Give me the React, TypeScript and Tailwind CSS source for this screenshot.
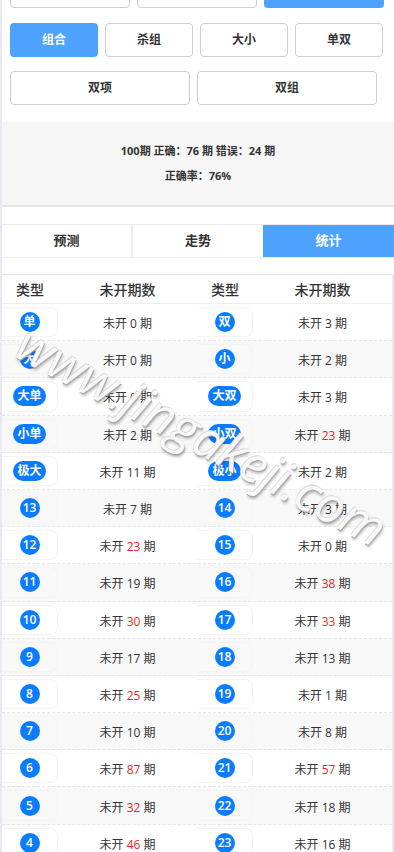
import React from 'react';

type Row = { a: string; an: number; b: string; bn: number };

const rows: Row[] = [
  { a: '单', an: 0, b: '双', bn: 3 },
  { a: '大', an: 0, b: '小', bn: 2 },
  { a: '大单', an: 0, b: '大双', bn: 3 },
  { a: '小单', an: 2, b: '小双', bn: 23 },
  { a: '极大', an: 11, b: '极小', bn: 2 },
  { a: '13', an: 7, b: '14', bn: 3 },
  { a: '12', an: 23, b: '15', bn: 0 },
  { a: '11', an: 19, b: '16', bn: 38 },
  { a: '10', an: 30, b: '17', bn: 33 },
  { a: '9', an: 17, b: '18', bn: 13 },
  { a: '8', an: 25, b: '19', bn: 1 },
  { a: '7', an: 10, b: '20', bn: 8 },
  { a: '6', an: 87, b: '21', bn: 57 },
  { a: '5', an: 32, b: '22', bn: 18 },
  { a: '4', an: 46, b: '23', bn: 16 },
];

function Badge({ label }: { label: string }) {
  const wide = label.length > 1 && !/^\d+$/.test(label);
  return (
    <span
      className={
        'inline-flex h-[20px] items-center justify-center rounded-full bg-[#0a7cff] text-[12px] font-semibold text-white ' +
        (wide ? 'px-[4px]' : 'w-[20px]')
      }
    >
      {label}
    </span>
  );
}

function Count({ n }: { n: number }) {
  return (
    <span className="text-[12px] text-[#333]">
      未开 <span className={n > 20 ? 'text-[#ff1a1a]' : ''}>{n}</span> 期
    </span>
  );
}

function TypeCell({ label }: { label: string }) {
  return (
    <div className="flex h-full items-center justify-center py-[3px]">
      <div className="flex h-full w-full items-center justify-center rounded-r-[8px] border-y border-r border-[#f4f4f4]">
        <Badge label={label} />
      </div>
    </div>
  );
}

function Btn({ label, w, active }: { label: string; w: string; active?: boolean }) {
  return (
    <button
      className={
        'h-[34px] rounded-[4px] text-[12px] font-bold ' +
        w +
        (active ? ' bg-[#4da3ff] text-white' : ' border border-[#cfcfcf] bg-white text-[#333]')
      }
    >
      {label}
    </button>
  );
}

export default function App() {
  return (
    <div
      className="relative h-[852px] overflow-hidden border-l-2 border-[#e8eaef] bg-white"
      style={{ fontFamily: '"Open Sans", "Noto Sans CJK SC", sans-serif' }}
    >
      <div className="-mt-[26px] px-[8px]">
        <div className="flex gap-[7px]">
          <Btn label="" w="w-[120px]" />
          <Btn label="" w="w-[120px]" />
          <Btn label="" w="w-[120px]" active />
        </div>
        <div className="mt-[15px] flex gap-[7px]">
          <Btn label="组合" w="w-[88px]" active />
          <Btn label="杀组" w="w-[88px]" />
          <Btn label="大小" w="w-[88px]" />
          <Btn label="单双" w="w-[88px]" />
        </div>
        <div className="mt-[14px] flex gap-[7px]">
          <Btn label="双项" w="w-[180px]" />
          <Btn label="双组" w="w-[180px]" />
        </div>
      </div>

      <div className="mt-[17px] flex h-[85px] flex-col items-center justify-center gap-[8px] border-b-2 border-[#e6e6e6] bg-[#f6f6f6] text-[11px] font-bold text-[#333]">
        <div>100期 正确：76 期 错误：24 期</div>
        <div>正确率：76%</div>
      </div>

      <div className="mt-[17px] flex h-[34px] border-y border-[#ececec] text-[13px] font-bold">
        <div className="flex w-[131px] items-center justify-center border-r-2 border-[#ececec] text-[#333]">预测</div>
        <div className="flex w-[130px] items-center justify-center text-[#333]">走势</div>
        <div className="flex flex-1 items-center justify-center bg-[#4da3ff] text-white">统计</div>
      </div>

      <div className="mt-[16px] border-r-2 border-t border-[#e8eaef]">
        <div className="grid h-[29px] grid-cols-[56px_139px_56px_1fr] items-center border-b border-[#eeeeee] text-[14px] font-medium text-[#333]">
          <div className="text-center">类型</div>
          <div className="text-center">未开期数</div>
          <div className="text-center">类型</div>
          <div className="text-center">未开期数</div>
        </div>
        {rows.map((r, i) => (
          <div
            key={i}
            className={
              'grid h-[37.2px] grid-cols-[56px_139px_56px_1fr] items-center border-b border-dashed border-[#e6e6e6] ' +
              (i % 2 === 1 ? 'bg-[#f8f8f8]' : 'bg-white')
            }
          >
            <TypeCell label={r.a} />
            <div className="text-center">
              <Count n={r.an} />
            </div>
            <TypeCell label={r.b} />
            <div className="text-center">
              <Count n={r.bn} />
            </div>
          </div>
        ))}
      </div>

      <div className="pointer-events-none absolute left-[-40px] top-[398px] w-[480px] rotate-[28deg] text-center text-[50px] italic text-white/90 [text-shadow:1px_1px_0_#aaa,-1px_-1px_0_#ddd,2px_2px_3px_rgba(0,0,0,0.3)]">
        www.jingakeji.com
      </div>
    </div>
  );
}
